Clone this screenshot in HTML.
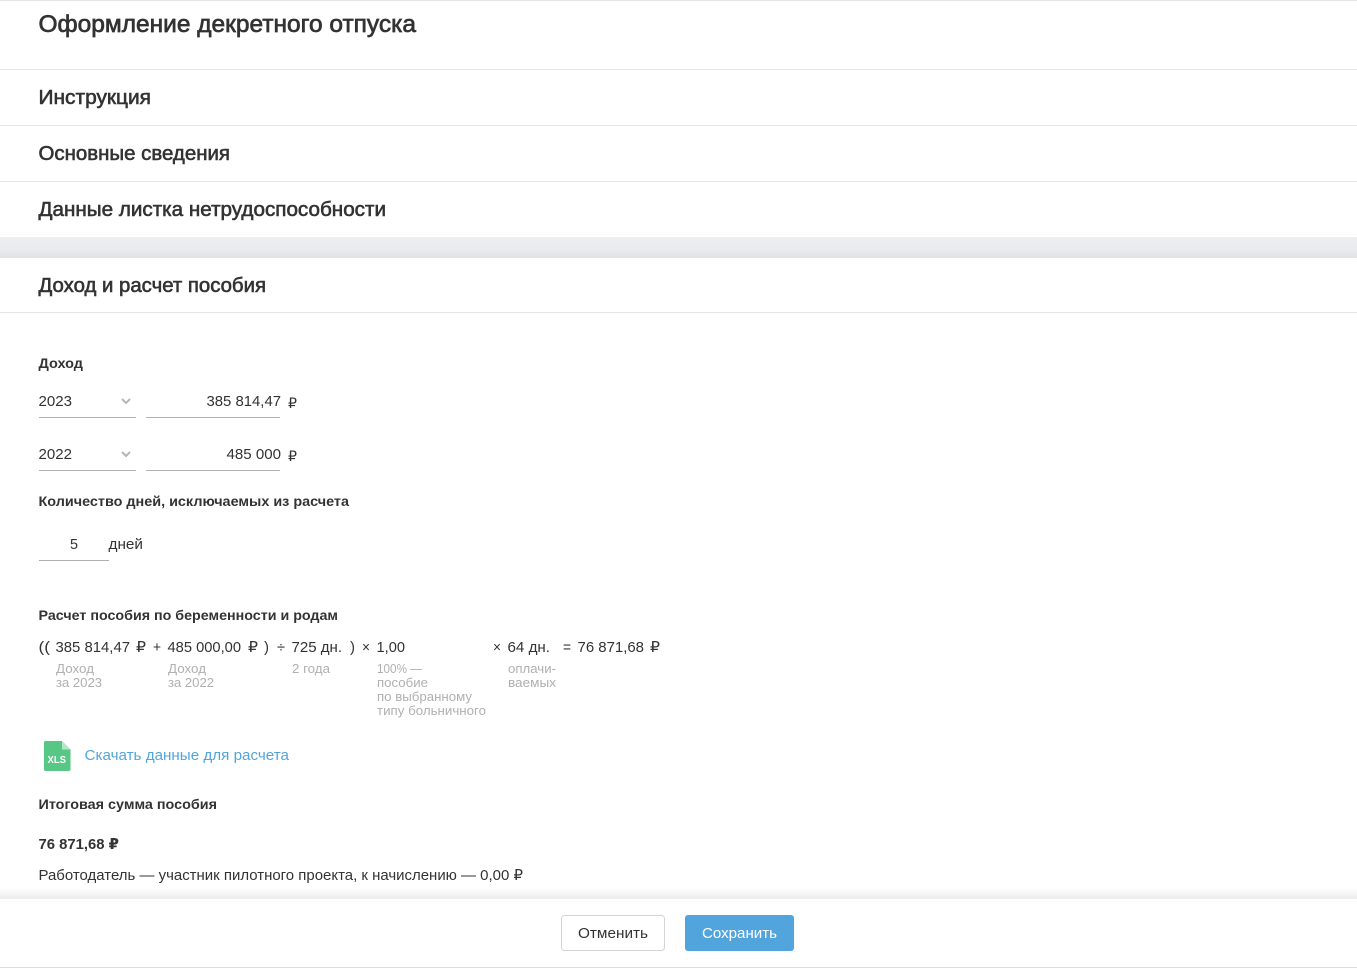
<!DOCTYPE html>
<html lang="ru">
<head>
<meta charset="utf-8">
<title>Оформление декретного отпуска</title>
<style>
html,body{margin:0;padding:0;background:#fff}
body{width:1357px;height:968px;overflow:hidden;position:relative}
svg{position:absolute;left:0;top:0;display:block}
text{font-family:"Liberation Sans","DejaVu Sans",sans-serif;fill:#333}
.h{font-size:20px;stroke:#333;stroke-width:.6px}
.t{font-size:24px;stroke:#333;stroke-width:.7px}
.b{font-size:14px;font-weight:bold}
.n{font-size:15px}
.r{font-size:14px}
.c{font-size:13px;fill:#b0b0b0}
.l{font-size:15px;fill:#52a5dc}
</style>
</head>
<body>
<svg width="1357" height="968" viewBox="0 0 1357 968" xmlns="http://www.w3.org/2000/svg">
<defs>
<linearGradient id="band" x1="0" y1="0" x2="0" y2="1"><stop offset="0" stop-color="#eceef1"/><stop offset="0.6" stop-color="#e9ebee"/><stop offset="1" stop-color="#dfe1e4"/></linearGradient>
<linearGradient id="sh" x1="0" y1="0" x2="0" y2="1"><stop offset="0" stop-color="#fff"/><stop offset="1" stop-color="#ececec"/></linearGradient>
</defs>
<rect x="0" y="0" width="1357" height="1" fill="#e6e6e6"/>
<rect x="0" y="69" width="1357" height="1" fill="#e6e6e6"/>
<rect x="0" y="125" width="1357" height="1" fill="#e6e6e6"/>
<rect x="0" y="181" width="1357" height="1" fill="#e6e6e6"/>
<rect x="0" y="237" width="1357" height="21" fill="url(#band)"/>
<rect x="0" y="312" width="1357" height="1" fill="#e6e6e6"/>

<text class="t" x="38.500" y="32" textLength="377.500" lengthAdjust="spacingAndGlyphs">Оформление декретного отпуска</text>
<text class="h" x="38.500" y="104" textLength="112.500" lengthAdjust="spacingAndGlyphs">Инструкция</text>
<text class="h" x="38.500" y="160" textLength="191.500" lengthAdjust="spacingAndGlyphs">Основные сведения</text>
<text class="h" x="38.500" y="216" textLength="347.500" lengthAdjust="spacingAndGlyphs">Данные листка нетрудоспособности</text>
<text class="h" x="38.500" y="292" textLength="227.500" lengthAdjust="spacingAndGlyphs">Доход и расчет пособия</text>

<text class="b" x="38.500" y="368" textLength="44.500" lengthAdjust="spacingAndGlyphs">Доход</text>
<text class="n" x="38.500" y="406" textLength="33.500" lengthAdjust="spacingAndGlyphs">2023</text>
<path d="M122 399l4 4 4-4" fill="none" stroke="#b5b5b5" stroke-width="2"/>
<rect x="39" y="417" width="97" height="1" fill="#b0b0b0"/>
<text class="n" x="206.500" y="406" textLength="74.500" lengthAdjust="spacingAndGlyphs">385 814,47</text>
<rect x="146" y="417" width="134" height="1" fill="#b0b0b0"/>
<text class="r" x="288" y="408" textLength="9" lengthAdjust="spacingAndGlyphs">₽</text>

<text class="n" x="38.500" y="459" textLength="33.500" lengthAdjust="spacingAndGlyphs">2022</text>
<path d="M122 452l4 4 4-4" fill="none" stroke="#b5b5b5" stroke-width="2"/>
<rect x="39" y="470" width="97" height="1" fill="#b0b0b0"/>
<text class="n" x="226.500" y="459" textLength="54.500" lengthAdjust="spacingAndGlyphs">485 000</text>
<rect x="146" y="470" width="134" height="1" fill="#b0b0b0"/>
<text class="r" x="288" y="461" textLength="9" lengthAdjust="spacingAndGlyphs">₽</text>

<text class="b" x="38.500" y="506" textLength="310.500" lengthAdjust="spacingAndGlyphs">Количество дней, исключаемых из расчета</text>
<text class="n" x="70" y="549" textLength="8" lengthAdjust="spacingAndGlyphs">5</text>
<text class="n" x="108.500" y="549" textLength="34.500" lengthAdjust="spacingAndGlyphs">дней</text>
<rect x="39" y="560" width="70" height="1" fill="#b0b0b0"/>

<text class="b" x="38.500" y="620" textLength="299.500" lengthAdjust="spacingAndGlyphs">Расчет пособия по беременности и родам</text>

<text class="n" x="38.500" y="652" textLength="11.500" lengthAdjust="spacingAndGlyphs">((</text>
<text class="n" x="55.500" y="652" textLength="74.500" lengthAdjust="spacingAndGlyphs">385 814,47</text>
<text class="n" x="136" y="652" textLength="10" lengthAdjust="spacingAndGlyphs">₽</text>
<text class="n" x="153" y="652" textLength="8" lengthAdjust="spacingAndGlyphs">+</text>
<text class="n" x="167.500" y="652" textLength="73.500" lengthAdjust="spacingAndGlyphs">485 000,00</text>
<text class="n" x="248" y="652" textLength="10" lengthAdjust="spacingAndGlyphs">₽</text>
<text class="n" x="264" y="652" textLength="5" lengthAdjust="spacingAndGlyphs">)</text>
<text class="n" x="277" y="652" textLength="8" lengthAdjust="spacingAndGlyphs">÷</text>
<text class="n" x="291.500" y="652" textLength="50.500" lengthAdjust="spacingAndGlyphs">725 дн.</text>
<text class="n" x="350" y="652" textLength="5" lengthAdjust="spacingAndGlyphs">)</text>
<text class="n" x="362" y="652" textLength="8" lengthAdjust="spacingAndGlyphs">×</text>
<text class="n" x="376.500" y="652" textLength="28.500" lengthAdjust="spacingAndGlyphs">1,00</text>
<text class="n" x="493" y="652" textLength="8" lengthAdjust="spacingAndGlyphs">×</text>
<text class="n" x="507.500" y="652" textLength="42.500" lengthAdjust="spacingAndGlyphs">64 дн.</text>
<text class="n" x="563" y="652" textLength="8" lengthAdjust="spacingAndGlyphs">=</text>
<text class="n" x="577.500" y="652" textLength="66.500" lengthAdjust="spacingAndGlyphs">76 871,68</text>
<text class="n" x="650" y="652" textLength="10" lengthAdjust="spacingAndGlyphs">₽</text>

<text class="c" x="56" y="673" textLength="38" lengthAdjust="spacingAndGlyphs">Доход</text>
<text class="c" x="56" y="687" textLength="46" lengthAdjust="spacingAndGlyphs">за 2023</text>
<text class="c" x="168" y="673" textLength="38" lengthAdjust="spacingAndGlyphs">Доход</text>
<text class="c" x="168" y="687" textLength="46" lengthAdjust="spacingAndGlyphs">за 2022</text>
<text class="c" x="292" y="673" textLength="38" lengthAdjust="spacingAndGlyphs">2 года</text>
<text class="c" x="377" y="673" textLength="45" lengthAdjust="spacingAndGlyphs">100% —</text>
<text class="c" x="377" y="687" textLength="51" lengthAdjust="spacingAndGlyphs">пособие</text>
<text class="c" x="377" y="701" textLength="95" lengthAdjust="spacingAndGlyphs">по выбранному</text>
<text class="c" x="377" y="715" textLength="109" lengthAdjust="spacingAndGlyphs">типу больничного</text>
<text class="c" x="508" y="673" textLength="48" lengthAdjust="spacingAndGlyphs">оплачи-</text>
<text class="c" x="508" y="687" textLength="48" lengthAdjust="spacingAndGlyphs">ваемых</text>

<path d="M45.500 741H62l8.500 8.500V769.500a1.500 1.500 0 0 1-1.500 1.500H45.500A1.500 1.500 0 0 1 44 769.500V742.500A1.500 1.500 0 0 1 45.500 741z" fill="#57c785"/>
<path d="M62 741l8.500 8.500H62z" fill="#b5e6c8"/>
<text x="47.500" y="763" textLength="18.500" lengthAdjust="spacingAndGlyphs" style="font-size:10px;font-weight:bold;fill:#fff">XLS</text>
<text class="l" x="84.500" y="760" textLength="204.500" lengthAdjust="spacingAndGlyphs">Скачать данные для расчета</text>

<text class="b" x="38.500" y="809" textLength="178.500" lengthAdjust="spacingAndGlyphs">Итоговая сумма пособия</text>
<text class="b" x="38.500" y="849" textLength="80.500" lengthAdjust="spacingAndGlyphs" style="font-size:15px">76 871,68 ₽</text>
<text class="n" x="38.500" y="880" textLength="484.500" lengthAdjust="spacingAndGlyphs">Работодатель — участник пилотного проекта, к начислению — 0,00 ₽</text>

<rect x="0" y="888" width="1357" height="11" fill="url(#sh)"/>
<rect x="0" y="899" width="1357" height="68" fill="#fff"/>
<rect x="0" y="967" width="1357" height="1" fill="#dcdcdc"/>

<rect x="561.500" y="915.500" width="103" height="35" rx="3" fill="#fff" stroke="#d4d4d4"/>
<text class="n" x="578" y="938" textLength="70" lengthAdjust="spacingAndGlyphs">Отменить</text>
<rect x="685" y="915" width="109" height="36" rx="3" fill="#52a5dc"/>
<text class="n" x="702" y="938" textLength="75" lengthAdjust="spacingAndGlyphs" style="fill:#fff">Сохранить</text>
</svg>
</body>
</html>
